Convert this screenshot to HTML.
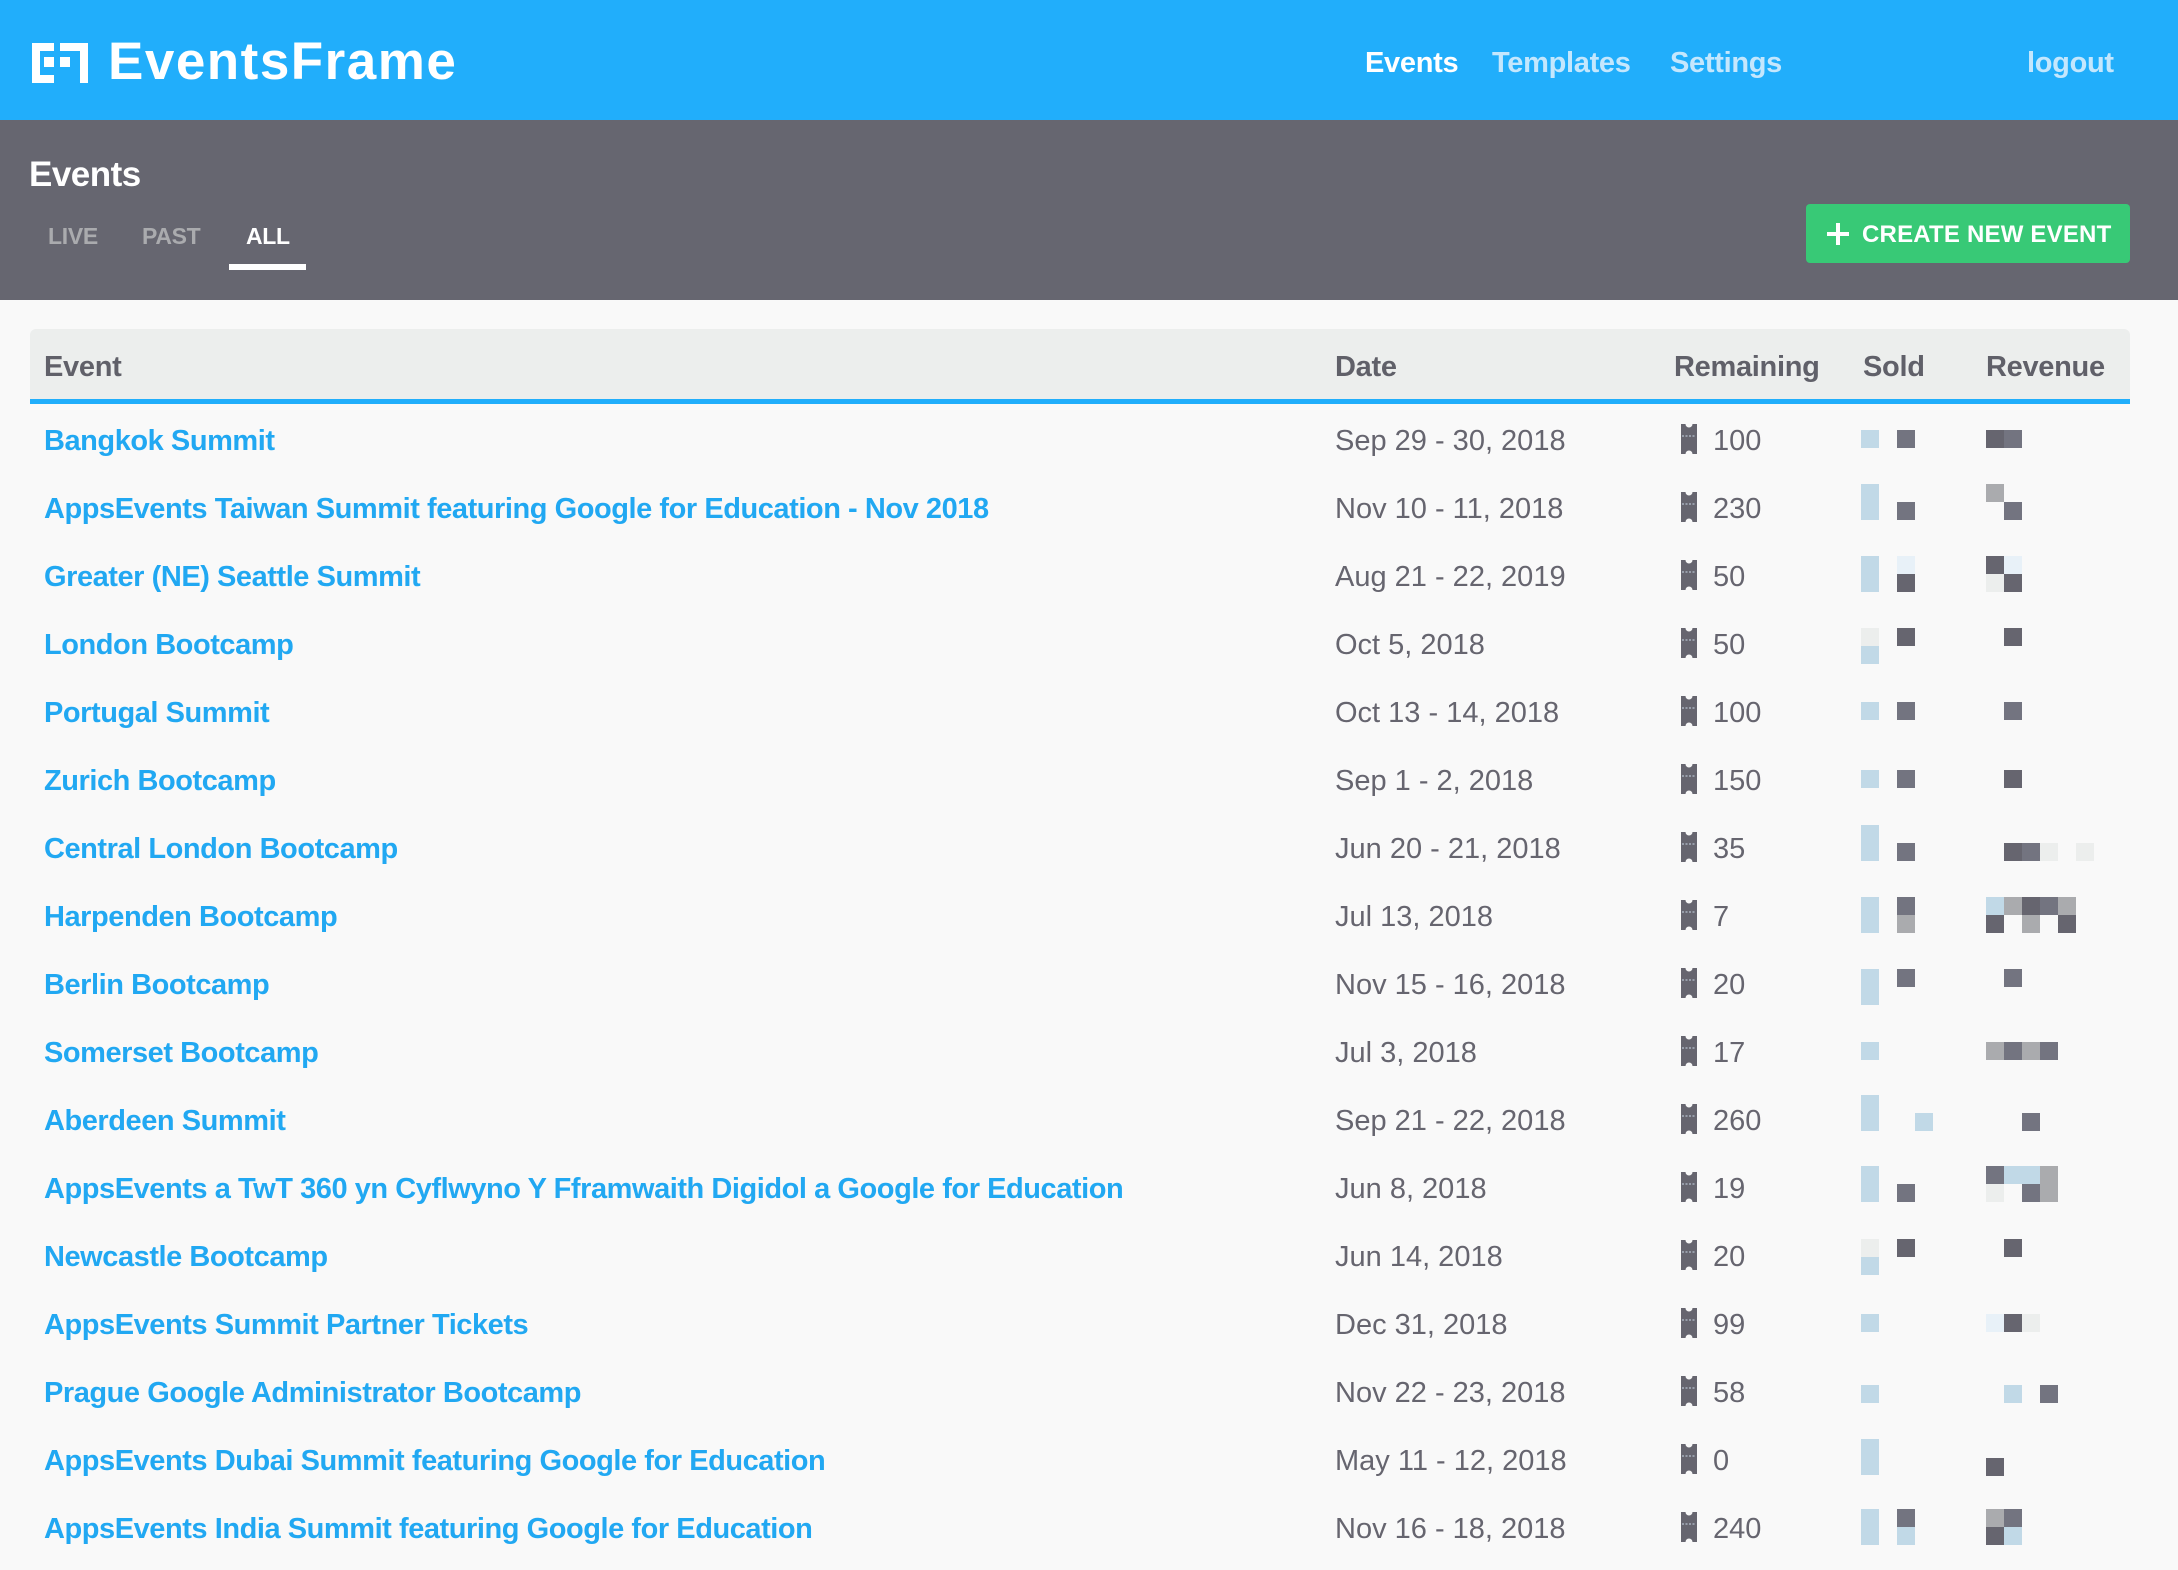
<!DOCTYPE html>
<html><head><meta charset="utf-8"><style>
*{margin:0;padding:0;box-sizing:border-box}
body{width:2178px;height:1570px;background:#f9f9f9;font-family:"Liberation Sans",Arial,sans-serif;position:relative;overflow:hidden}
.top{position:absolute;left:0;top:0;width:2178px;height:120px;background:#21aefb}
.logo{position:absolute;left:108px;top:31px;color:#fff;font-weight:bold;font-size:53px;letter-spacing:1.5px}
.nav{position:absolute;top:47px;font-size:29px;color:#c4e7fd;font-weight:bold;letter-spacing:-0.3px}
.band{position:absolute;left:0;top:120px;width:2178px;height:180px;background:#666670}
.title{position:absolute;left:29px;top:155px;color:#fff;font-size:35px;font-weight:bold;letter-spacing:-0.5px}
.tab{position:absolute;top:223px;font-size:23px;color:#aaabae;font-weight:bold;letter-spacing:-0.3px}
.btn{position:absolute;left:1806px;top:204px;width:324px;height:59px;background:#38c976;border-radius:4px;color:#fff;font-weight:bold;font-size:24px;line-height:61px;padding-left:56px;letter-spacing:0.2px}
.th{position:absolute;left:30px;top:329px;width:2100px;height:70px;background:#eceeed;border-radius:6px 6px 0 0}
.bl{position:absolute;left:30px;top:399px;width:2100px;height:5px;background:#21aefb}
.h{position:absolute;top:351px;font-size:29px;font-weight:bold;color:#606069;letter-spacing:-0.3px}
.r{position:absolute;left:0;width:2178px;height:68px}
.r span{position:absolute;top:20px;font-size:29px;white-space:nowrap}
.n{left:44px;color:#21a8f2;font-weight:bold;letter-spacing:-0.45px}
.d{left:1335px;color:#66656f}
.q{left:1713px;color:#66656f}
.r svg{position:absolute;left:1681px;top:19px}
.b{position:absolute;width:36px;height:36px}
.b i{position:absolute;width:18px;height:18px}
</style></head><body>
<div class="top">
<svg style="position:absolute;left:32px;top:43px" width="56" height="40" viewBox="0 0 56 40">
<path fill="#fff" d="M0 0H22V8H8V32H22V40H0Z"/><rect x="12" y="14" width="10" height="10" fill="#fff"/>
<path fill="#fff" d="M28 0H56V40H48V8H28Z"/><rect x="28" y="14" width="10" height="10" fill="#fff"/>
</svg>
<div class="logo">EventsFrame</div>
<div class="nav" style="left:1365px;color:#fff">Events</div>
<div class="nav" style="left:1492px">Templates</div>
<div class="nav" style="left:1670px">Settings</div>
<div class="nav" style="left:2027px">logout</div>
</div>
<div class="band">
</div>
<div class="title">Events</div>
<div class="tab" style="left:48px">LIVE</div>
<div class="tab" style="left:142px">PAST</div>
<div class="tab" style="left:246px;color:#fff">ALL</div>
<div style="position:absolute;left:229px;top:264px;width:77px;height:6px;background:#fff"></div>
<div class="btn"><svg style="position:absolute;left:20px;top:18px" width="24" height="24" viewBox="0 0 24 24"><path d="M12 1V23M1 12H23" stroke="#fff" stroke-width="4"/></svg>CREATE NEW EVENT</div>
<div class="th"></div><div class="bl"></div>
<div class="h" style="left:44px">Event</div>
<div class="h" style="left:1335px">Date</div>
<div class="h" style="left:1674px">Remaining</div>
<div class="h" style="left:1863px">Sold</div>
<div class="h" style="left:1986px">Revenue</div>

<svg width="0" height="0" style="position:absolute"><defs><symbol id="tk" viewBox="0 0 16 30"><path fill="#66656f" d="M0 0H4.5A3.5 3.5 0 0 0 11.5 0H16V30H11.5A3.5 3.5 0 0 0 4.5 30H0Z"/><path d="M1 12H15" stroke="#c9d8e6" stroke-width="1" stroke-dasharray="2 1.5"/></symbol></defs></svg>

<div class="r" style="top:405px"><span class="n">Bangkok Summit</span><span class="d">Sep 29 - 30, 2018</span><svg width="16" height="30"><use href="#tk"/></svg><span class="q">100</span>
<div class="b" style="left:1861px;top:25px"><i style="left:0;top:0;background:#c1d9e7"></i><i style="left:36px;top:0;background:#737480"></i></div>
<div class="b" style="left:1986px;top:25px"><i style="left:0;top:0;background:#66656f"></i><i style="left:18px;top:0;background:#737480"></i></div></div>

<div class="r" style="top:473px"><span class="n">AppsEvents Taiwan Summit featuring Google for Education - Nov 2018</span><span class="d">Nov 10 - 11, 2018</span><svg width="16" height="30"><use href="#tk"/></svg><span class="q">230</span>
<div class="b" style="left:1861px;top:11px"><i style="left:0;top:0;height:36px;background:#c1d9e7"></i><i style="left:36px;top:18px;background:#737480"></i></div>
<div class="b" style="left:1986px;top:11px"><i style="left:0;top:0;background:#aaabae"></i><i style="left:18px;top:18px;background:#737480"></i></div></div>

<div class="r" style="top:541px"><span class="n">Greater (NE) Seattle Summit</span><span class="d">Aug 21 - 22, 2019</span><svg width="16" height="30"><use href="#tk"/></svg><span class="q">50</span>
<div class="b" style="left:1861px;top:15px"><i style="left:0;top:0;height:36px;background:#c1d9e7"></i><i style="left:36px;top:0;background:#e8f1f8"></i><i style="left:36px;top:18px;background:#66656f"></i></div>
<div class="b" style="left:1986px;top:15px"><i style="left:0;top:0;background:#66656f"></i><i style="left:18px;top:0;background:#e8f1f8"></i><i style="left:0;top:18px;background:#eceeed"></i><i style="left:18px;top:18px;background:#66656f"></i></div></div>

<div class="r" style="top:609px"><span class="n">London Bootcamp</span><span class="d">Oct 5, 2018</span><svg width="16" height="30"><use href="#tk"/></svg><span class="q">50</span>
<div class="b" style="left:1861px;top:19px"><i style="left:0;top:0;background:#eceeed"></i><i style="left:0;top:18px;background:#c1d9e7"></i><i style="left:36px;top:0;background:#66656f"></i></div>
<div class="b" style="left:1986px;top:19px"><i style="left:18px;top:0;background:#66656f"></i></div></div>

<div class="r" style="top:677px"><span class="n">Portugal Summit</span><span class="d">Oct 13 - 14, 2018</span><svg width="16" height="30"><use href="#tk"/></svg><span class="q">100</span>
<div class="b" style="left:1861px;top:25px"><i style="left:0;top:0;background:#c1d9e7"></i><i style="left:36px;top:0;background:#737480"></i></div>
<div class="b" style="left:1986px;top:25px"><i style="left:18px;top:0;background:#737480"></i></div></div>

<div class="r" style="top:745px"><span class="n">Zurich Bootcamp</span><span class="d">Sep 1 - 2, 2018</span><svg width="16" height="30"><use href="#tk"/></svg><span class="q">150</span>
<div class="b" style="left:1861px;top:25px"><i style="left:0;top:0;background:#c1d9e7"></i><i style="left:36px;top:0;background:#737480"></i></div>
<div class="b" style="left:1986px;top:25px"><i style="left:18px;top:0;background:#66656f"></i></div></div>

<div class="r" style="top:813px"><span class="n">Central London Bootcamp</span><span class="d">Jun 20 - 21, 2018</span><svg width="16" height="30"><use href="#tk"/></svg><span class="q">35</span>
<div class="b" style="left:1861px;top:12px"><i style="left:0;top:0;height:36px;background:#c1d9e7"></i><i style="left:36px;top:18px;background:#737480"></i></div>
<div class="b" style="left:1986px;top:12px"><i style="left:18px;top:18px;background:#66656f"></i><i style="left:36px;top:18px;background:#737480"></i><i style="left:54px;top:18px;background:#eceeed"></i><i style="left:90px;top:18px;background:#eceeed"></i></div></div>

<div class="r" style="top:881px"><span class="n">Harpenden Bootcamp</span><span class="d">Jul 13, 2018</span><svg width="16" height="30"><use href="#tk"/></svg><span class="q">7</span>
<div class="b" style="left:1861px;top:16px"><i style="left:0;top:0;height:36px;background:#c1d9e7"></i><i style="left:36px;top:0;background:#737480"></i><i style="left:36px;top:18px;background:#aaabae"></i></div>
<div class="b" style="left:1986px;top:16px"><i style="left:0;top:0;background:#c1d9e7"></i><i style="left:18px;top:0;background:#aaabae"></i><i style="left:36px;top:0;background:#66656f"></i><i style="left:54px;top:0;background:#737480"></i><i style="left:72px;top:0;background:#aaabae"></i><i style="left:0;top:18px;background:#66656f"></i><i style="left:36px;top:18px;background:#aaabae"></i><i style="left:72px;top:18px;background:#66656f"></i></div></div>

<div class="r" style="top:949px"><span class="n">Berlin Bootcamp</span><span class="d">Nov 15 - 16, 2018</span><svg width="16" height="30"><use href="#tk"/></svg><span class="q">20</span>
<div class="b" style="left:1861px;top:20px"><i style="left:0;top:0;height:36px;background:#c1d9e7"></i><i style="left:36px;top:0;background:#737480"></i></div>
<div class="b" style="left:1986px;top:20px"><i style="left:18px;top:0;background:#737480"></i></div></div>

<div class="r" style="top:1017px"><span class="n">Somerset Bootcamp</span><span class="d">Jul 3, 2018</span><svg width="16" height="30"><use href="#tk"/></svg><span class="q">17</span>
<div class="b" style="left:1861px;top:25px"><i style="left:0;top:0;background:#c1d9e7"></i></div>
<div class="b" style="left:1986px;top:25px"><i style="left:0;top:0;background:#aaabae"></i><i style="left:18px;top:0;background:#737480"></i><i style="left:36px;top:0;background:#aaabae"></i><i style="left:54px;top:0;background:#737480"></i></div></div>

<div class="r" style="top:1085px"><span class="n">Aberdeen Summit</span><span class="d">Sep 21 - 22, 2018</span><svg width="16" height="30"><use href="#tk"/></svg><span class="q">260</span>
<div class="b" style="left:1861px;top:10px"><i style="left:0;top:0;height:36px;background:#c1d9e7"></i><i style="left:54px;top:18px;background:#c1d9e7"></i></div>
<div class="b" style="left:1986px;top:10px"><i style="left:36px;top:18px;background:#737480"></i></div></div>

<div class="r" style="top:1153px"><span class="n">AppsEvents a TwT 360 yn Cyflwyno Y Fframwaith Digidol a Google for Education</span><span class="d">Jun 8, 2018</span><svg width="16" height="30"><use href="#tk"/></svg><span class="q">19</span>
<div class="b" style="left:1861px;top:13px"><i style="left:0;top:0;height:36px;background:#c1d9e7"></i><i style="left:36px;top:18px;background:#737480"></i></div>
<div class="b" style="left:1986px;top:13px"><i style="left:0;top:0;background:#737480"></i><i style="left:18px;top:0;background:#c1d9e7"></i><i style="left:36px;top:0;background:#c1d9e7"></i><i style="left:54px;top:0;height:36px;background:#aaabae"></i><i style="left:0;top:18px;background:#eceeed"></i><i style="left:36px;top:18px;background:#737480"></i></div></div>

<div class="r" style="top:1221px"><span class="n">Newcastle Bootcamp</span><span class="d">Jun 14, 2018</span><svg width="16" height="30"><use href="#tk"/></svg><span class="q">20</span>
<div class="b" style="left:1861px;top:18px"><i style="left:0;top:0;background:#eceeed"></i><i style="left:0;top:18px;background:#c1d9e7"></i><i style="left:36px;top:0;background:#66656f"></i></div>
<div class="b" style="left:1986px;top:18px"><i style="left:18px;top:0;background:#66656f"></i></div></div>

<div class="r" style="top:1289px"><span class="n">AppsEvents Summit Partner Tickets</span><span class="d">Dec 31, 2018</span><svg width="16" height="30"><use href="#tk"/></svg><span class="q">99</span>
<div class="b" style="left:1861px;top:25px"><i style="left:0;top:0;background:#c1d9e7"></i></div>
<div class="b" style="left:1986px;top:25px"><i style="left:0;top:0;background:#e8f1f8"></i><i style="left:18px;top:0;background:#66656f"></i><i style="left:36px;top:0;background:#eceeed"></i></div></div>

<div class="r" style="top:1357px"><span class="n">Prague Google Administrator Bootcamp</span><span class="d">Nov 22 - 23, 2018</span><svg width="16" height="30"><use href="#tk"/></svg><span class="q">58</span>
<div class="b" style="left:1861px;top:28px"><i style="left:0;top:0;background:#c1d9e7"></i></div>
<div class="b" style="left:1986px;top:28px"><i style="left:18px;top:0;background:#c1d9e7"></i><i style="left:54px;top:0;background:#737480"></i></div></div>

<div class="r" style="top:1425px"><span class="n">AppsEvents Dubai Summit featuring Google for Education</span><span class="d">May 11 - 12, 2018</span><svg width="16" height="30"><use href="#tk"/></svg><span class="q">0</span>
<div class="b" style="left:1861px;top:14px"><i style="left:0;top:0;height:36px;background:#c1d9e7"></i></div>
<div class="b" style="left:1986px;top:14px"><i style="left:0;top:19px;background:#66656f"></i></div></div>

<div class="r" style="top:1493px"><span class="n">AppsEvents India Summit featuring Google for Education</span><span class="d">Nov 16 - 18, 2018</span><svg width="16" height="30"><use href="#tk"/></svg><span class="q">240</span>
<div class="b" style="left:1861px;top:16px"><i style="left:0;top:0;height:36px;background:#c1d9e7"></i><i style="left:36px;top:0;background:#737480"></i><i style="left:36px;top:18px;background:#c1d9e7"></i></div>
<div class="b" style="left:1986px;top:16px"><i style="left:0;top:0;background:#aaabae"></i><i style="left:18px;top:0;background:#737480"></i><i style="left:0;top:18px;background:#66656f"></i><i style="left:18px;top:18px;background:#c1d9e7"></i></div></div>
</body></html>
